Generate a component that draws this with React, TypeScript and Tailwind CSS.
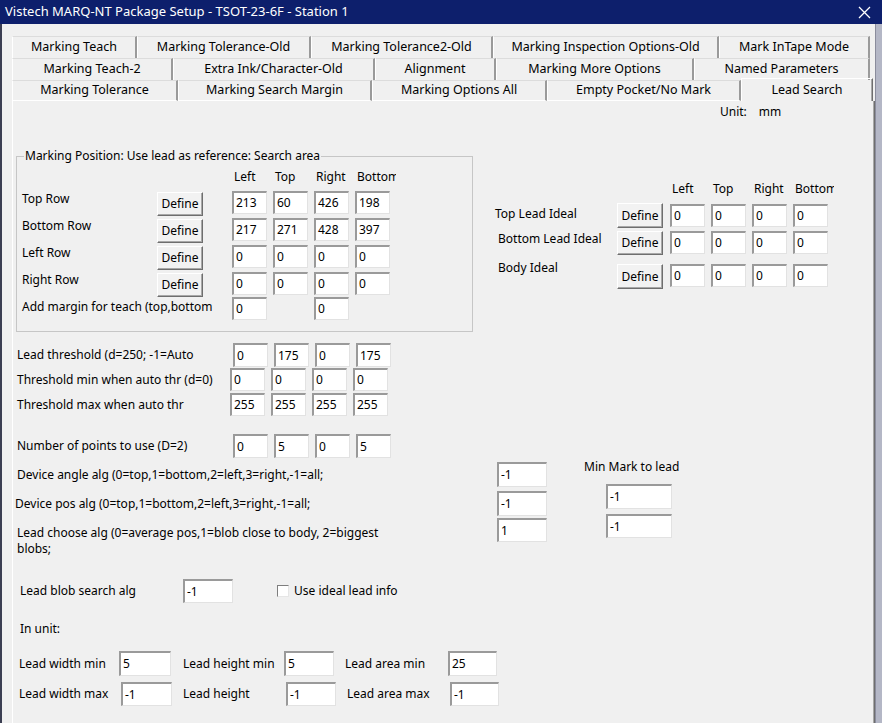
import React from "react";

const F = "font-['Noto_Sans','Open_Sans',sans-serif]";

function Inp({ v, w = "w-[35px]", h = "h-[23px]", cls = "" }: { v: string; w?: string; h?: string; cls?: string }) {
  return (
    <div
      className={`${w} ${h} ${cls} shrink-0 bg-white border-t-2 border-l-2 border-r border-b border-t-[#9a9a9a] border-l-[#9a9a9a] border-r-[#e2e2e2] border-b-[#e2e2e2] flex items-center pl-[2px] text-[12px] leading-[16px]`}
    >
      {v}
    </div>
  );
}

function Btn({ h = "h-[24px]", cls = "" }: { h?: string; cls?: string }) {
  return (
    <div
      className={`w-[46px] ${h} ${cls} shrink-0 bg-[#f2f2f2] border border-t-white border-l-white border-r-[#6e6e6e] border-b-[#6e6e6e] shadow-[inset_-1px_-1px_0_#a8a8a8] flex items-center justify-center text-[12px] leading-[16px]`}
    >
      Define
    </div>
  );
}

function Four({ vals, cls = "" }: { vals: string[]; cls?: string }) {
  return (
    <div className={`flex gap-[6px] ${cls}`}>
      {vals.map((v, i) => (
        <Inp key={i} v={v} />
      ))}
    </div>
  );
}

function Headers() {
  return (
    <div className="flex h-[16px] text-[12px] leading-[16px]">
      {["Left", "Top", "Right", "Bottom"].map((t) => (
        <div key={t} className="w-[41px] pl-[2px] whitespace-nowrap overflow-hidden">
          {t}
        </div>
      ))}
    </div>
  );
}

type Tab = { t: string; w: string };

const row1: Tab[] = [
  { t: "Marking Teach", w: "w-[125px]" },
  { t: "Marking Tolerance-Old", w: "w-[174px]" },
  { t: "Marking Tolerance2-Old", w: "w-[182px]" },
  { t: "Marking Inspection Options-Old", w: "w-[226px]" },
  { t: "Mark InTape Mode", w: "w-[151px]" },
];
const row2: Tab[] = [
  { t: "Marking Teach-2", w: "w-[161px]" },
  { t: "Extra Ink/Character-Old", w: "w-[202px]" },
  { t: "Alignment", w: "w-[121px]" },
  { t: "Marking More Options", w: "w-[198px]" },
  { t: "Named Parameters", w: "w-[176px]" },
];
const row3: Tab[] = [
  { t: "Marking Tolerance", w: "w-[166px]" },
  { t: "Marking Search Margin", w: "w-[194px]" },
  { t: "Marking Options All", w: "w-[175px]" },
  { t: "Empty Pocket/No Mark", w: "w-[194px]" },
];

function TabCell({ t, w, h, bottom }: { t: string; w: string; h: string; bottom?: boolean }) {
  return (
    <div
      className={`${w} ${h} shrink-0 flex items-center justify-center whitespace-nowrap text-[12.5px] border-t border-l border-r-2 border-t-[#dcdcdc] border-l-white border-r-[#9a9a9a] ${bottom ? "border-b border-b-white" : ""}`}
    >
      {t}
    </div>
  );
}

export default function App() {
  return (
    <div className={`w-[882px] h-[723px] overflow-hidden bg-[#f0f0f0] text-black flex flex-col ${F}`}>
      {/* Title bar */}
      <div className="h-[24px] shrink-0 bg-[#0d1f6c] flex items-center justify-between pl-[5px] pr-[11px] text-white text-[13px]">
        <span className="whitespace-nowrap">Vistech MARQ-NT Package Setup - TSOT-23-6F - Station 1</span>
        <svg width="13" height="13" viewBox="0 0 13 13">
          <path d="M1 1L12 12M12 1L1 12" stroke="white" strokeWidth="1.3" />
        </svg>
      </div>

      <div className="flex flex-1 min-h-0">
        <div className="w-[2px] shrink-0 bg-[#3b3e52]" />
        <div className="w-[863px] shrink-0 ml-[10px] flex flex-col">
          {/* Tabs */}
          <div className="mt-[12px] flex h-[22px]">
            {row1.map((tb) => (
              <TabCell key={tb.t} t={tb.t} w={tb.w} h="h-[22px]" />
            ))}
          </div>
          <div className="flex h-[22px]">
            {row2.map((tb) => (
              <TabCell key={tb.t} t={tb.t} w={tb.w} h="h-[22px]" />
            ))}
          </div>
          <div className="flex items-end h-[23px] -mt-[2px]">
            {row3.map((tb) => (
              <TabCell key={tb.t} t={tb.t} w={tb.w} h="h-[21px]" bottom />
            ))}
            <div className="w-[132px] h-[23px] shrink-0 flex items-start pt-[2px] justify-center text-[12.5px] border-t border-l border-r border-t-white border-l-white border-r-[#6e6e6e] shadow-[inset_-1px_0_0_#a8a8a8] whitespace-nowrap">
              Lead Search
            </div>
          </div>

          {/* Panel */}
          <div className="flex-1 border-l border-r border-l-white border-r-[#6e6e6e] shadow-[inset_-1px_0_0_#a8a8a8] flex flex-col text-[12px] leading-[16px]">
            {/* Unit */}
            <div className="mt-[3px] h-[16px] flex ml-[707px]">
              <span>Unit:</span>
              <span className="ml-[12px]">mm</span>
            </div>

            {/* Middle */}
            <div className="mt-[28px] flex items-start">
              <fieldset className="ml-[3px] w-[457px] border border-[#c6c6c6] pb-[11px]">
                <legend className="ml-[7px] px-[1px] leading-[16px] whitespace-nowrap">
                  Marking Position: Use lead as reference: Search area
                </legend>
                <div className="mt-[5px] ml-[215px]">
                  <Headers />
                </div>
                {[
                  { l: "Top Row", v: ["213", "60", "426", "198"] },
                  { l: "Bottom Row", v: ["217", "271", "428", "397"] },
                  { l: "Left Row", v: ["0", "0", "0", "0"] },
                  { l: "Right Row", v: ["0", "0", "0", "0"] },
                ].map((r, i) => (
                  <div key={r.l} className={`flex items-start ${i === 0 ? "mt-[6px]" : ""} ${i === 3 ? "h-[25px]" : "h-[27px]"}`}>
                    <div className="w-[135px] ml-[5px] whitespace-nowrap">{r.l}</div>
                    <Btn cls="mt-[1px]" />
                    <Four vals={r.v} cls="ml-[29px]" />
                  </div>
                ))}
                <div className="flex items-start h-[23px]">
                  <div className="w-[210px] ml-[5px] mt-[2px] whitespace-nowrap">Add margin for teach (top,bottom</div>
                  <Inp v="0" />
                  <Inp v="0" cls="ml-[47px]" />
                </div>
              </fieldset>

              <div className="ml-[22px] flex flex-col">
                <div className="mt-[33px] ml-[175px]">
                  <Headers />
                </div>
                <div className="mt-[6px] h-[28px] flex items-start">
                  <div className="w-[122px] mt-[3px] whitespace-nowrap">Top Lead Ideal</div>
                  <Btn h="h-[25px]" />
                  <Four vals={["0", "0", "0", "0"]} cls="ml-[7px] mt-[1px]" />
                </div>
                <div className="h-[33px] flex items-start">
                  <div className="w-[122px] pl-[3px] whitespace-nowrap">Bottom Lead Ideal</div>
                  <Btn />
                  <Four vals={["0", "0", "0", "0"]} cls="ml-[7px]" />
                </div>
                <div className="h-[25px] flex items-start">
                  <div className="w-[122px] pl-[3px] -mt-[4px] whitespace-nowrap">Body Ideal</div>
                  <Btn h="h-[25px]" />
                  <Four vals={["0", "0", "0", "0"]} cls="ml-[7px]" />
                </div>
              </div>
            </div>

            {/* Thresholds */}
            <div className="mt-[11px] ml-[4px] flex flex-col">
              <div className="h-[25px] flex items-start">
                <div className="w-[216px] h-[24px] flex items-center whitespace-nowrap">Lead threshold (d=250; -1=Auto</div>
                <Four vals={["0", "175", "0", "175"]} cls="[&>div]:h-[24px]" />
              </div>
              <div className="h-[25px] flex items-start">
                <div className="w-[213px] h-[23px] flex items-center whitespace-nowrap">Threshold min when auto thr (d=0)</div>
                <Four vals={["0", "0", "0", "0"]} />
              </div>
              <div className="h-[23px] flex items-start">
                <div className="w-[213px] h-[23px] flex items-center whitespace-nowrap">Threshold max when auto thr</div>
                <Four vals={["255", "255", "255", "255"]} />
              </div>
              <div className="mt-[18px] h-[24px] flex items-start">
                <div className="w-[216px] h-[24px] flex items-center whitespace-nowrap">Number of points to use (D=2)</div>
                <Four vals={["0", "5", "0", "5"]} cls="[&>div]:h-[24px]" />
              </div>
            </div>

            {/* Device algs */}
            <div className="mt-[1px] ml-[4px] flex items-start">
              <div className="w-[530px] pt-[3px] flex flex-col">
                <div className="h-[25px] flex items-center">
                  <div className="w-[480px] whitespace-nowrap">Device angle alg (0=top,1=bottom,2=left,3=right,-1=all;</div>
                  <Inp v="-1" w="w-[50px]" h="h-[25px]" />
                </div>
                <div className="mt-[4px] h-[25px] flex items-center">
                  <div className="w-[480px] -ml-[2px] whitespace-nowrap">Device pos alg (0=top,1=bottom,2=left,3=right,-1=all;</div>
                  <Inp v="-1" w="w-[50px]" h="h-[25px]" cls="ml-[2px]" />
                </div>
                <div className="mt-[2px] flex items-start">
                  <div className="w-[480px] mt-[7px] leading-[16px] whitespace-nowrap">
                    Lead choose alg (0=average pos,1=blob close to body, 2=biggest
                    <br />
                    blobs;
                  </div>
                  <Inp v="1" w="w-[50px]" h="h-[24px]" />
                </div>
              </div>
              <div className="ml-[37px] flex flex-col">
                <div className="h-[16px] whitespace-nowrap">Min Mark to lead</div>
                <Inp v="-1" w="w-[66px]" h="h-[25px]" cls="ml-[22px] mt-[9px]" />
                <Inp v="-1" w="w-[66px]" h="h-[24px]" cls="ml-[22px] mt-[5px]" />
              </div>
            </div>

            {/* Blob search */}
            <div className="mt-[22px] ml-[7px] h-[24px] flex items-center">
              <div className="w-[163px] whitespace-nowrap">Lead blob search alg</div>
              <Inp v="-1" w="w-[50px]" h="h-[24px]" />
              <div className="ml-[44px] w-[12px] h-[12px] bg-white border border-t-[#7e7e7e] border-l-[#7e7e7e] border-r-[#e6e6e6] border-b-[#e6e6e6]" />
              <div className="ml-[5px] whitespace-nowrap">Use ideal lead info</div>
            </div>

            <div className="mt-[18px] ml-[7px] h-[16px]">In unit:</div>

            <div className="mt-[14px] ml-[6px] h-[25px] flex items-center">
              <div className="w-[100px] whitespace-nowrap">Lead width min</div>
              <Inp v="5" w="w-[52px]" h="h-[25px]" />
              <div className="ml-[12px] w-[101px] whitespace-nowrap">Lead height min</div>
              <Inp v="5" w="w-[50px]" h="h-[25px]" />
              <div className="ml-[11px] w-[103px] whitespace-nowrap">Lead area min</div>
              <Inp v="25" w="w-[49px]" h="h-[25px]" />
            </div>
            <div className="mt-[6px] ml-[6px] h-[24px] flex items-center">
              <div className="w-[102px] whitespace-nowrap">Lead width max</div>
              <Inp v="-1" w="w-[51px]" h="h-[24px]" />
              <div className="ml-[11px] w-[103px] whitespace-nowrap">Lead height</div>
              <Inp v="-1" w="w-[50px]" h="h-[24px]" />
              <div className="ml-[11px] w-[103px] whitespace-nowrap">Lead area max</div>
              <Inp v="-1" w="w-[49px]" h="h-[24px]" />
            </div>
          </div>
        </div>
        <div className="w-[7px] shrink-0 border-l border-l-[#8a8c9c] bg-[#b4b7c6]" />
      </div>
    </div>
  );
}
